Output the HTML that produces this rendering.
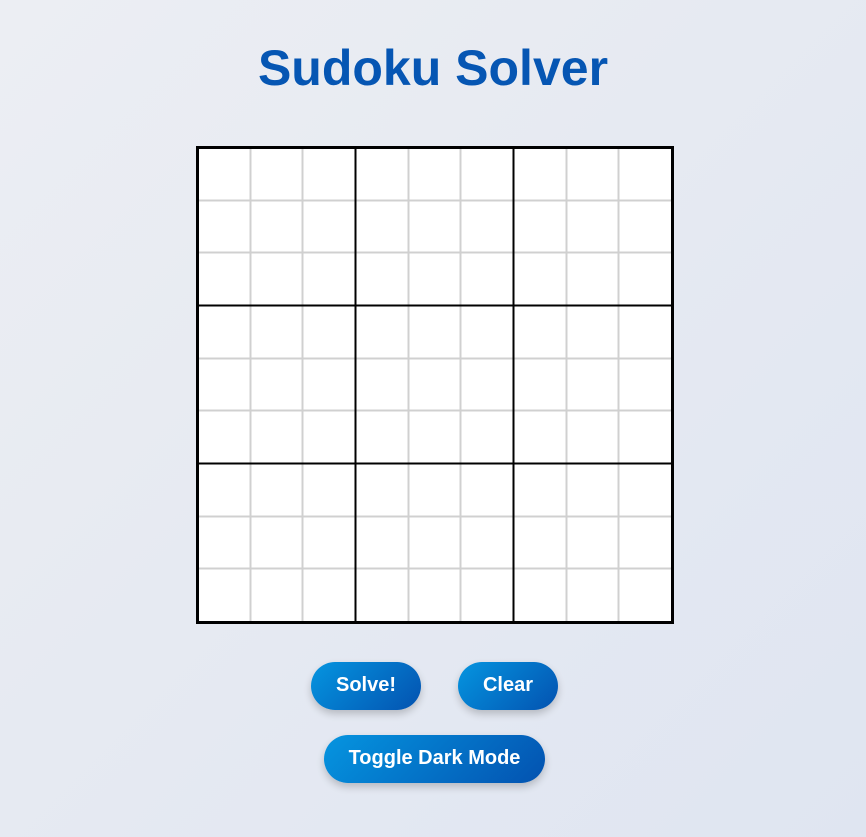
<!DOCTYPE html>
<html><head><style>
html,body{margin:0;width:866px;height:837px;overflow:hidden}
body{background:linear-gradient(135deg,#eceef3,#dfe5f1);font-family:"Liberation Sans",Arial,sans-serif;position:relative}
h1{position:absolute;left:0;width:866px;margin:0;text-align:center;top:38px;font-size:50px;line-height:60px;color:#0656b3;font-weight:bold}
.b{position:absolute;height:48px;border-radius:24px;background:linear-gradient(135deg,#0595e0,#0352b0);color:#fff;font-weight:bold;font-size:20px;line-height:46px;text-align:center;box-shadow:0 4px 8px rgba(0,0,0,.2)}
svg{position:absolute;left:0;top:0}
</style></head><body>
<h1>Sudoku Solver</h1>
<svg width="866" height="837">
<rect x="197.5" y="147.5" width="475" height="475" fill="#fff"/>
<g stroke="#d0d0d0" stroke-width="2">
<line x1="250.5" y1="148" x2="250.5" y2="622"/><line x1="302.5" y1="148" x2="302.5" y2="622"/>
<line x1="408.5" y1="148" x2="408.5" y2="622"/><line x1="460.5" y1="148" x2="460.5" y2="622"/>
<line x1="566.5" y1="148" x2="566.5" y2="622"/><line x1="618.5" y1="148" x2="618.5" y2="622"/>
<line y1="200.5" x1="198" y2="200.5" x2="672"/><line y1="252.5" x1="198" y2="252.5" x2="672"/>
<line y1="358.5" x1="198" y2="358.5" x2="672"/><line y1="410.5" x1="198" y2="410.5" x2="672"/>
<line y1="516.5" x1="198" y2="516.5" x2="672"/><line y1="568.5" x1="198" y2="568.5" x2="672"/>
</g>
<g stroke="#000" stroke-width="2">
<line x1="355.5" y1="148" x2="355.5" y2="622"/><line x1="513.5" y1="148" x2="513.5" y2="622"/>
<line y1="305.5" x1="198" y2="305.5" x2="672"/><line y1="463.5" x1="198" y2="463.5" x2="672"/>
</g>
<rect x="197.5" y="147.5" width="475" height="475" fill="none" stroke="#000" stroke-width="3"/>
</svg>
<div class="b" style="left:311px;top:662px;width:110px">Solve!</div>
<div class="b" style="left:458px;top:662px;width:100px">Clear</div>
<div class="b" style="left:324px;top:735px;width:221px">Toggle Dark Mode</div>
</body></html>
